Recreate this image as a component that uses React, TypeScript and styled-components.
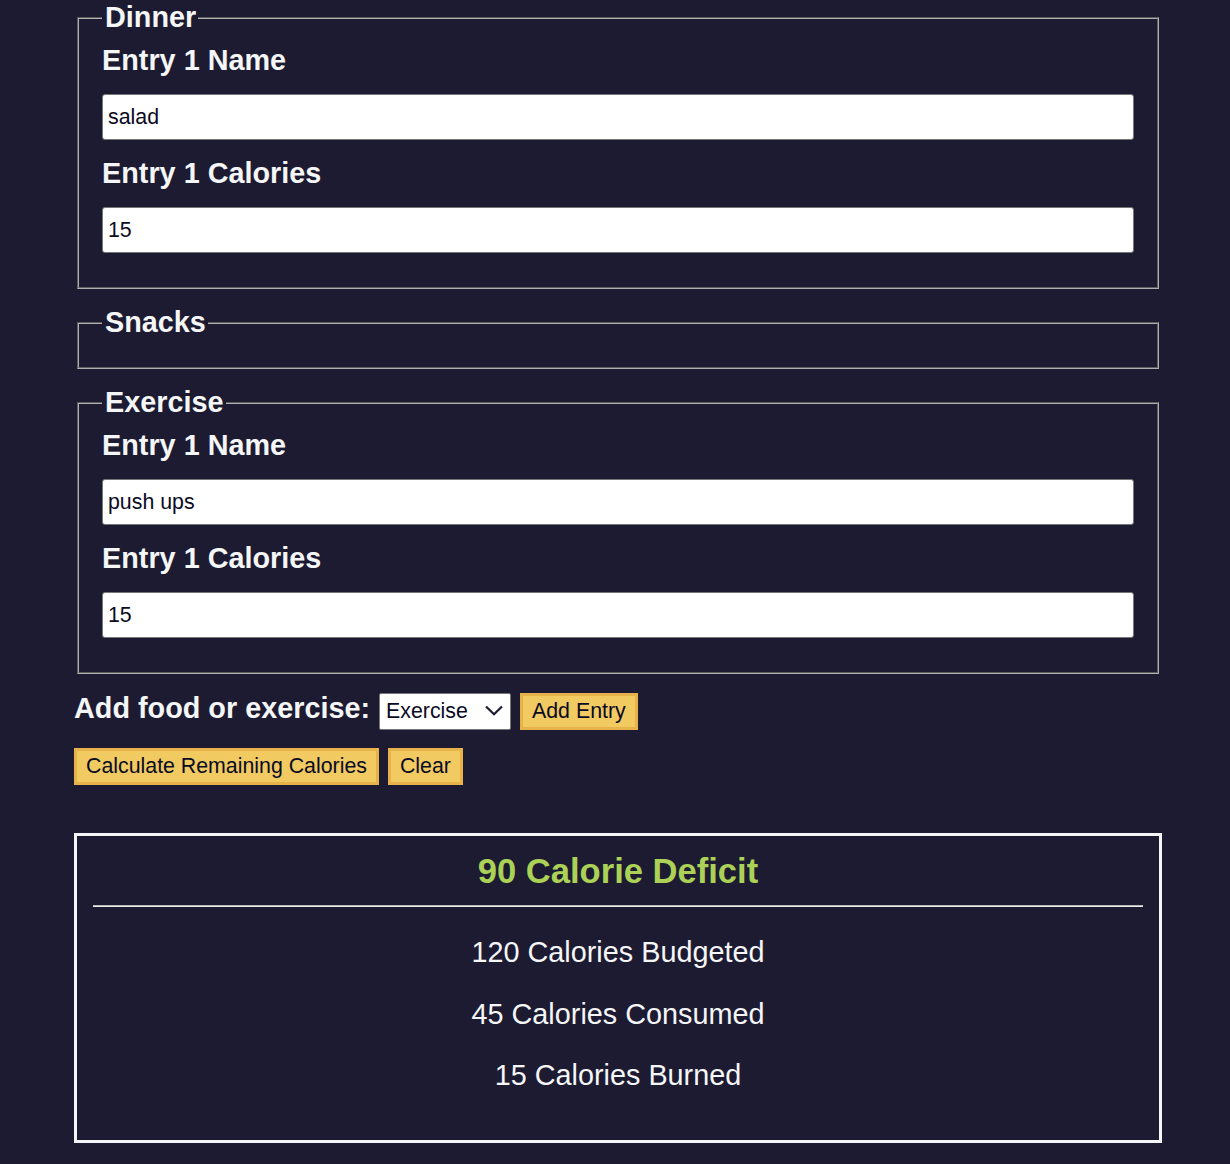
import React from "react";
import styled, { createGlobalStyle } from "styled-components";

const GlobalStyle = createGlobalStyle`
  html, body {
    margin: 0;
    padding: 0;
    background: #1d1b31;
  }
  body {
    color: #f5f6f7;
    font-family: "Liberation Sans", Arial, Helvetica, sans-serif;
    font-size: 21.33px;
  }
  * { box-sizing: border-box; }
`;

const Page = styled.main`
  width: 1088px;
  margin-left: 74px;
  padding: 1px 0 24px;
`;

const Form = styled.form`
  display: flex;
  flex-direction: column;
`;

const Group = styled.fieldset`
  margin: 0 3px 17px;
  padding: 10px 23px 18px;
  border: 2px groove #b0b0b0;
  min-width: 0;
`;

const Legend = styled.legend`
  font-size: 28.8px;
  font-weight: bold;
  line-height: 33px;
  padding: 0 2px 0 3px;
`;

const EntryList = styled.div`
  display: flex;
  flex-direction: column;
  gap: 17px;
  padding-bottom: 16px;
`;

const Label = styled.label`
  display: block;
  font-size: 28.8px;
  font-weight: bold;
  line-height: 33px;
`;

const TextInput = styled.input`
  display: block;
  width: 100%;
  height: 46px;
  padding: 0 5px;
  border: 1px solid #767676;
  border-radius: 3px;
  background: #ffffff;
  color: #0a0a23;
  font-family: inherit;
  font-size: 21.33px;
`;

const ControlRow = styled.div<{ $top: number }>`
  display: flex;
  align-items: baseline;
  gap: 9px;
  margin-top: ${(p) => p.$top}px;
`;

const RowLabel = styled.label`
  font-size: 28.8px;
  font-weight: bold;
  line-height: 33px;
`;

const SelectWrap = styled.span`
  position: relative;
  display: inline-flex;
`;

const Select = styled.select`
  appearance: none;
  -webkit-appearance: none;
  width: 132px;
  height: 37px;
  padding: 0 30px 0 6px;
  border: 1px solid #767676;
  border-radius: 2px;
  background: #ffffff;
  color: #0a0a23;
  font-family: inherit;
  font-size: 21.33px;
`;

const Chevron = styled.svg`
  position: absolute;
  right: 8px;
  top: 12px;
  width: 18px;
  height: 11px;
  pointer-events: none;
`;

const Button = styled.button`
  height: 37px;
  padding: 0 9px;
  border: 3px solid #e8b24a;
  background: #f1ca61;
  color: #0a0a23;
  font-family: inherit;
  font-size: 21.33px;
  cursor: pointer;
`;

const Output = styled.div`
  margin-top: 48px;
  border: 3px solid #f5f6f7;
  padding: 16px 16px 19px;
  text-align: center;
`;

const Headline = styled.div<{ $deficit: boolean }>`
  font-size: 34.56px;
  font-weight: bold;
  line-height: 39px;
  color: ${(p) => (p.$deficit ? "#acd157" : "#ffadad")};
`;

const Rule = styled.hr`
  margin: 14px 0 0;
  border: none;
  border-top: 1px solid #b8b8b8;
  border-bottom: 1px solid #ececec;
`;

const Stat = styled.p`
  margin: 28.8px 0;
  font-size: 28.8px;
  line-height: 33px;
`;

type Entry = { name: string; calories: string };
const groups: { title: string; entries: Entry[] }[] = [
  { title: "Dinner", entries: [{ name: "salad", calories: "15" }] },
  { title: "Snacks", entries: [] },
  { title: "Exercise", entries: [{ name: "push ups", calories: "15" }] },
];

export default function App() {
  return (
    <>
      <GlobalStyle />
      <Page>
        <Form onSubmit={(e) => e.preventDefault()}>
          {groups.map((g) => (
            <Group key={g.title}>
              <Legend>{g.title}</Legend>
              {g.entries.length > 0 && (
                <EntryList>
                  {g.entries.map((en, i) => (
                    <React.Fragment key={i}>
                      <Label>Entry {i + 1} Name</Label>
                      <TextInput type="text" defaultValue={en.name} />
                      <Label>Entry {i + 1} Calories</Label>
                      <TextInput type="number" defaultValue={en.calories} />
                    </React.Fragment>
                  ))}
                </EntryList>
              )}
            </Group>
          ))}
          <ControlRow $top={1}>
            <RowLabel>Add food or exercise:</RowLabel>
            <SelectWrap>
              <Select defaultValue="exercise">
                <option value="breakfast">Breakfast</option>
                <option value="lunch">Lunch</option>
                <option value="dinner">Dinner</option>
                <option value="snacks">Snacks</option>
                <option value="exercise">Exercise</option>
              </Select>
              <Chevron viewBox="0 0 18 11" fill="none">
                <path d="M1 1.5 L9 9.3 L17 1.5" stroke="#1b1b32" strokeWidth="2.2" />
              </Chevron>
            </SelectWrap>
            <Button type="button">Add Entry</Button>
          </ControlRow>
          <ControlRow $top={18}>
            <Button type="submit">Calculate Remaining Calories</Button>
            <Button type="button">Clear</Button>
          </ControlRow>
        </Form>
        <Output>
          <Headline $deficit>90 Calorie Deficit</Headline>
          <Rule />
          <Stat>120 Calories Budgeted</Stat>
          <Stat>45 Calories Consumed</Stat>
          <Stat>15 Calories Burned</Stat>
        </Output>
      </Page>
    </>
  );
}
